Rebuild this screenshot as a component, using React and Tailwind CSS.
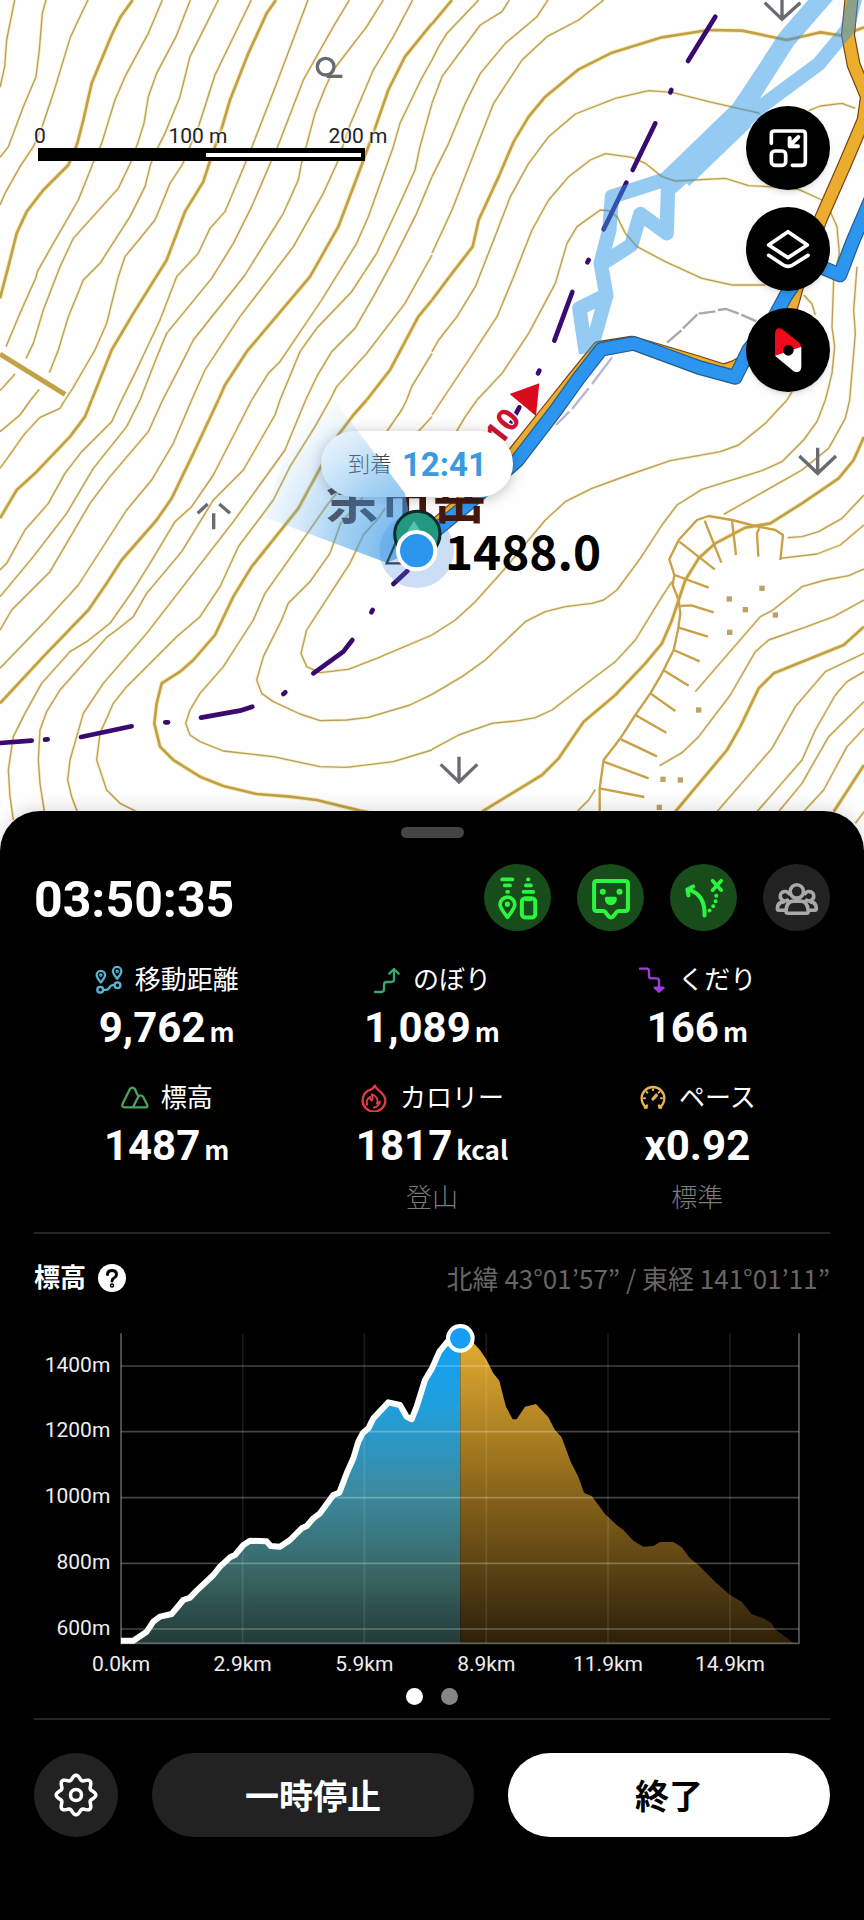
import React from "react";

/* Map geometry is drawn in four tiles, each placed with a translate. */
const TILES = [
  {
    at: "translate(0 0)",
    thin: [
      "44,0 20,120 14,200 0,262",
      "138,0 127,40 118,150 108,230 70,320 25,440 0,472",
      "264,0 235,60 210,115 160,280 128,375 100,440 60,500 15,580 0,615",
      "487,0 445,100 375,230 345,300 305,430 278,492 235,600 160,730 112,815 108,832 60,940 18,1040",
      "571,0 528,110 470,220 445,290 432,370 413,430 390,492 355,565 220,715 180,800 130,930 100,1030 78,1075",
      "655,0 570,170 540,290 495,400 470,450 452,492 435,560 390,650 300,790 250,840 205,950 175,1050 148,1118",
      "754,0 645,225 597,375 548,492 510,550 490,600 465,660 375,770 355,830 320,970 285,1050 215,1170 195,1200",
      "924,0 830,250 760,430 735,492 675,635 630,685 595,760 530,830 480,960 400,1130 365,1200",
      "1048,0 1000,80 910,240 837,430 810,492 755,620 700,730 635,835 500,1000 475,1060 420,1200",
      "1150,0 1100,80 1000,210 975,265 945,340 921,430 904,492 895,540 850,640 735,825 580,1020 540,1100 488,1200",
      "1238,0 1180,110 1120,210 1050,375 1010,492 970,580 880,740 720,950 615,1110 575,1200",
      "1296,180 1265,235 1200,370 1180,440 1105,650 1070,730 965,900 840,1085 805,1120 755,1200",
      "1296,310 1260,440 1245,510 1200,610 1130,760 1055,875 950,985 900,1055 840,1200",
      "1296,530 1250,640 1180,780 1120,890 1065,985 995,1055 950,1130 917,1200",
      "1296,765 1215,910 1100,1060 1010,1160 990,1200",
      "1296,1060 1235,1160 1220,1200",
      "45,1122 0,1172",
      "118,1168 92,1200",
    ],
    bold: [
      "398,0 362,50 335,105 275,250 250,360 232,430 205,495 130,570 80,635 50,700 25,800 0,895",
      "828,0 800,40 745,160 690,300 665,385 645,440 627,492 610,545 555,635 500,780 400,940 335,1050 275,1200",
      "1296,70 1215,170 1165,270 1125,385 1085,495 1015,680 930,830 740,1055 675,1155 655,1200",
      "1296,900 1255,950 1170,1110 1100,1200",
    ],
  },
  {
    at: "translate(1296 0)",
    thin: [
      "140,0 45,100 20,140 0,180",
      "232,0 210,35 145,75 30,230 0,310",
      "348,0 315,50 220,130 145,220 100,310 50,430 0,530",
      "515,0 440,60 345,110 270,180 185,310 130,450 60,630 0,760",
      "985,340 830,305 720,277 650,272 550,295 430,342 350,410 290,490 235,590 185,720 130,860 75,950 20,1020 0,1055",
      "1130,332 1165,318 1230,310 1270,325",
      "1170,600 1100,568 1010,560 950,557 880,535 730,543 690,530 640,490 600,472 520,461 475,480 410,530 350,600 300,690 245,830 195,950 110,1080 30,1200",
      "1000,855 900,855 810,835 700,785 615,740 580,700 555,650 530,632 505,630 435,680 405,730 370,850 290,1000 210,1120 135,1200",
      "1195,635 1215,680 1222,760 1205,840 1200,980 1208,1040 1200,1120 1180,1200",
      "1115,885 1140,912 1150,945",
      "1080,1175 1065,1200",
      "1275,800 1265,930 1270,1000 1253,1200",
    ],
    bold: [
      "60,0 0,72",
      "1296,82 1230,107 1165,97 1065,120 930,92 830,90 690,112 540,158 440,208 340,290 290,350 245,425 200,530 140,660 122,740 60,820 0,900",
    ],
  },
  {
    at: "translate(0 1200)",
    thin: [
      "92,0 60,45 0,95",
      "195,0 180,25 120,52 75,100 0,205",
      "365,0 335,65 245,155 195,220 145,310 75,390 20,490 0,510",
      "420,0 380,80 280,205 200,340 100,470 0,590",
      "488,0 445,95 330,230 270,310 150,515 35,630 0,690",
      "575,0 520,130 455,240 380,330 235,555 130,670 0,805",
      "755,0 640,225 575,320 525,365 450,490 400,570 330,670 260,725 210,755 125,850 75,940 40,1010 25,1110 30,1190 40,1260",
      "840,0 825,45 730,210 640,300 545,455 440,580 400,650 350,690 320,712 180,870 140,935 120,990 115,1080 120,1150 133,1235",
      "917,0 855,150 700,365 440,700 310,850 250,940 210,1080 203,1140 215,1190 232,1235",
      "990,0 945,80 870,200 820,300 715,440 660,560 600,650 530,710 380,860 340,910 300,1000 290,1080 320,1170 360,1210 410,1235",
      "1220,0 1205,30 1160,95 985,310 880,460 795,580 760,660 670,800 600,880 570,930 557,970 570,1005 600,1025 670,1053 820,1070 960,1100 1040,1102 1180,1085 1296,1050",
      "1296,50 1250,100 1022,370 990,460 930,545 865,610 845,660 790,770 770,840 785,880 820,905 900,942 960,962 1040,960 1105,952 1230,915 1296,883",
      "1155,325 1135,355 1090,405 1050,490 920,690 903,760 920,800 960,818 1045,808 1130,775 1296,705",
    ],
    bold: [
      "275,0 255,50 210,110 110,215 50,270 0,355",
      "655,0 580,160 515,295 470,360 365,480 320,550 265,630 130,770 0,910",
      "1100,0 1060,45 1015,105 960,205 895,325 755,500 700,590 645,705 580,780 540,815 485,850 470,910 463,970 480,1040 520,1080 600,1130 670,1158 770,1182 870,1190 950,1200 1080,1232 1200,1256",
    ],
  },
  {
    at: "translate(1296 1200)",
    thin: [
      "30,0 0,45",
      "135,0 100,50 70,100",
      "1065,0 1000,70 920,135 865,155 715,182 590,225 480,265 400,305 340,360 215,510 130,605 70,660 0,705",
      "1180,0 1155,65 1115,120 1050,185 990,212 810,268 735,315 690,375 625,475 555,570 515,600 480,610 400,620 340,635 280,665 160,780 90,830 0,883",
      "1253,0 1240,55 1190,145 1110,210 875,343",
      "720,545 690,590 610,720 550,785 490,830 360,930 310,953 260,962 180,970 80,1005 0,1048",
      "1067,413 1110,410 1160,395 1230,355 1296,285",
      "1045,475 1155,462 1225,435 1296,375",
      "790,875 985,650 1020,632 1110,560 1180,540 1250,527 1296,507",
      "683,1097 750,1058 800,1010 895,885 970,755 1010,720 1110,685 1205,650 1296,600",
      "855,1235 1020,1045 1090,920 1180,815 1296,760",
      "975,1235 1110,1080 1150,990 1210,885 1245,845 1296,815",
      "1040,1235 1110,1150 1190,1010 1296,905",
      "1115,1235 1175,1170 1245,1040 1296,985",
      "1270,1270 1296,1235",
      "435,1235 470,1200 490,1168",
    ],
    bold: [
      "1296,110 1265,180 1220,235 1110,310 1015,370 940,383 850,430 800,475 760,540 740,600 720,660 690,730 640,790 550,885 455,965 380,1075 330,1125 150,1235",
      "1296,680 1235,735 1025,820 980,865 925,980 885,1050 730,1235",
      "1205,1235 1296,1095",
    ],
  },
];

const CLIFF = [
  "1045,480 1053,405 1030,390 970,378 900,360 830,348 795,360 740,420 712,478 727,525 722,555 740,600 745,640 738,690 725,750 690,820 655,880 610,945 565,1015 515,1080 503,1165 503,1240",
  "818,362 868,488",
  "900,362 912,465",
  "982,385 975,400 979,470",
  "742,425 848,508",
  "728,525 830,563",
  "745,618 778,616 845,637",
  "740,683 828,710",
  "725,750 803,784",
  "697,812 770,857",
  "655,880 730,933",
  "610,945 703,998",
  "567,1018 675,1069",
  "515,1085 650,1135",
  "503,1165 637,1191",
];

const ROCKS = [[990, 565], [892, 597], [940, 629], [1030, 645], [893, 697], [800, 930], [693, 1138], [745, 1140], [682, 1222]];

const BORDER_EAST = [
  "850,50 768,183",
  "718,270 715,277",
  "670,370 602,510",
  "583,548 515,688",
  "470,780 466,787",
  "421,876 367,1022",
  "322,1112 318,1120",
  "262,1222 248,1248",
  "240,1265 236,1273",
];
const BORDER_WEST = [
  "1222,513 1180,552",
  "1118,630 1114,637",
  "1057,720 1030,755 940,820",
  "856,877 850,882",
  "757,920 720,932 603,953",
  "496,967 504,967",
  "395,979 243,1011",
  "135,1019 143,1018",
  "95,1022 0,1029",
];

const ORANGE = "1260,-20 1248,105 1265,195 1305,290 1295,360 1240,490 1165,660 1095,860 1070,950 980,1060 910,1100 875,1112 800,1088 600,1028 500,1044 422,1140 350,1230 240,1368 97,1500 -12,1595";
const BLUE = "1320,590 1262,725 1224,825 1165,800 1120,800 1060,890 1020,965 950,1050 910,1132 800,1102 605,1030 508,1048 440,1135 372,1230 255,1382 110,1510 0,1600 -46,1650";

const Lines = ({ list, ...rest }) => list.map((p) => <polyline key={p} points={p} {...rest} />);

function MapCanvas() {
  return (
    <svg viewBox="0 0 2592 2553" className="block h-full w-full" fill="none" aria-hidden="true">
      {TILES.map((t) => (
        <g key={t.at} transform={t.at} strokeLinejoin="round">
          <g stroke="#fbeebb">
            <Lines list={t.thin} strokeWidth="9" />
            <Lines list={t.bold} strokeWidth="14" />
          </g>
          <g stroke="#b5a066">
            <Lines list={t.thin} strokeWidth="4" />
          </g>
          <g stroke="#c0a04a">
            <Lines list={t.bold} strokeWidth="8" />
          </g>
        </g>
      ))}
      <path d="M0 1062 195 1183" stroke="#c2a244" strokeWidth="15" />
      <g transform="translate(1296 1200)">
        <g stroke="#c9a045" strokeWidth="7" strokeLinejoin="round">
          <Lines list={CLIFF} />
        </g>
        {ROCKS.map(([x, y]) => (
          <rect key={x} x={x - 8} y={y - 8} width="16" height="16" fill="#bda268" />
        ))}
      </g>

      <g stroke="#6b6a70" strokeWidth="10">
        <circle cx="977" cy="200" r="25" />
        <path d="M980 229h47" />
        <path d="M2346 0v58M2294 8l52 50 55-50" />
        <path d="M2453 1343v75M2398 1368l55 52 55-52" />
        <path d="M1377 2270v75M1322 2293l55 53 55-53" />
        <path d="M623 1512l-30 28M658 1512l32 28M641 1540v48" />
      </g>

      <g stroke="#3a0a70" strokeWidth="14" strokeLinecap="round" strokeLinejoin="round">
        <g transform="translate(1296 0)"><Lines list={BORDER_EAST} /></g>
        <g transform="translate(0 1200)"><Lines list={BORDER_WEST} /></g>
      </g>

      <g transform="translate(1296 0)">
        <g stroke="#a9a9ad" strokeWidth="7">
          <path d="M705 1028l43-37M753 985l43-42M800 941l50-7M858 930l24-3 38 14M928 944l45 20" />
          <path d="M540 1072l-60 80M470 1165l-50 62M412 1235l-40 40" stroke="#b9b6cf" />
        </g>
        <g strokeLinejoin="round">
          <polyline points={ORANGE} stroke="#7a3f10" strokeWidth="42" />
          <polyline points={ORANGE} stroke="#ebad2e" strokeWidth="35" />
        </g>
        <g opacity="0.5" stroke="#2f97ea" strokeWidth="43" strokeLinejoin="round">
          <path d="M1178 -20 1070 100 920 325 700 538 540 590 532 690 506 790 523 885 442 925 462 1060" />
          <path d="M1200 -40 1062 120 925 335" strokeWidth="56" />
          <path d="M1275 -30 1245 90 1160 192 980 325 800 490 708 570 704 700 625 642 598 735 512 790" />
          <path d="M932 350 745 530" strokeWidth="78" />
          <path d="M523 885 478 1045" />
        </g>
        <polygon points="233,1182 322,1150 312,1248" fill="#da0b1c" />
        <g strokeLinejoin="round">
          <polyline points={BLUE} stroke="#255c88" strokeWidth="44" />
          <polyline points={BLUE} stroke="#2b95f0" strokeWidth="37" />
        </g>
      </g>

      <text
        x="1500"
        y="1343"
        transform="rotate(-52 1500 1343)"
        className="font-[Noto_Sans,sans-serif] font-bold"
        fontSize="94"
        fill="#cc1230"
        stroke="#ffffff"
        strokeWidth="8"
        paintOrder="stroke"
      >
        10
      </text>
      <text x="978" y="1556" className="font-['Noto_Sans_CJK_JP',sans-serif] font-bold" fontSize="160" fill="#45180f">
        余市岳
      </text>
    </svg>
  );
}

/* Heading cone and current position, above the arrival bubble. */
function PositionMarker() {
  return (
    <svg viewBox="0 0 2592 2553" className="pointer-events-none absolute inset-0 h-full w-full" fill="none" aria-hidden="true">
      <defs>
        <radialGradient id="cone" gradientUnits="userSpaceOnUse" cx="1250" cy="1650" r="520">
          <stop offset="0" stopColor="#2b8fe6" stopOpacity="0.75" />
          <stop offset="0.45" stopColor="#4ba3e8" stopOpacity="0.5" />
          <stop offset="1" stopColor="#8cc4f2" stopOpacity="0" />
        </radialGradient>
      </defs>
      <circle cx="1250" cy="1652" r="112" fill="#3d80e0" fillOpacity="0.26" />
      <path d="M1250 1652 1215 1480 980 1170 880 1300 790 1550 1160 1688Z" fill="url(#cone)" />
      <path d="M1195 1610 1160 1690H1250" stroke="#2b4a60" strokeWidth="7" />
      <circle cx="1252" cy="1602" r="68" fill="#21987f" stroke="#0c2a2c" strokeWidth="9" />
      <path d="M1212 1610l30-48 30 48Z" fill="#5cc0b0" />
      <circle cx="1250" cy="1652" r="56" fill="#2c95ee" stroke="#ffffff" strokeWidth="12" />
      <text x="1335" y="1709" className="font-['Noto_Sans_CJK_JP',sans-serif] font-bold" fontSize="143" fill="#000000">
        1488.0
      </text>
    </svg>
  );
}

function ScaleBar() {
  return (
    <div className="absolute left-[38px] top-[124px] w-[327px]">
      <div className="-ml-20 flex w-[480px] text-center text-[21px] leading-6 text-[#222] [text-shadow:0_0_3px_#fff,0_0_3px_#fff,0_0_4px_#fff]">
        <span className="w-40 pl-1">0</span>
        <span className="w-40">100 m</span>
        <span className="w-40">200 m</span>
      </div>
      <div className="flex h-[13px] items-center bg-black pr-1">
        <div className="ml-[168px] h-1 flex-1 bg-white" />
      </div>
    </div>
  );
}

function MapButton({ label, viewBox, children }) {
  return (
    <button aria-label={label} className="size-[84px] rounded-full bg-black text-white shadow-md">
      <svg viewBox={viewBox} className="size-full" fill="none" stroke="currentColor" strokeWidth="11" strokeLinecap="round" strokeLinejoin="round">
        {children}
      </svg>
    </button>
  );
}

function ModeButton({ label, x, off, children }) {
  const tone = off ? "bg-[#222222] text-[#a9a9a9]" : "bg-[#184c1b] text-[#2cf540]";
  return (
    <button aria-label={label} className={"size-[67px] rounded-full " + tone}>
      <svg viewBox={`${x - 100} 192 200 200`} className="size-full" fill="none" stroke="currentColor" strokeWidth="12" strokeLinecap="round" strokeLinejoin="round">
        {children}
      </svg>
    </button>
  );
}

function Stat({ icon, label, value, unit, note }) {
  return (
    <div className="flex flex-col items-center">
      <div className="flex items-center gap-3">
        {icon}
        <span className="text-[26px] leading-8">{label}</span>
      </div>
      <div className="mt-2 flex items-baseline gap-1 font-bold leading-[48px]">
        <span className="text-[42px]">{value}</span>
        {unit && <span className="font-['Noto_Sans_CJK_JP',sans-serif] text-[26px] leading-8">{unit}</span>}
      </div>
      {note && <div className="mt-3 text-[26px] font-light leading-8 text-[#7c7c7c]">{note}</div>}
    </div>
  );
}

function StatIcon({ viewBox, className, children }) {
  return (
    <svg viewBox={viewBox} className={"size-7 " + className} fill="none" stroke="currentColor" strokeWidth="7" strokeLinecap="round" strokeLinejoin="round" aria-hidden="true">
      {children}
    </svg>
  );
}

const distanceIcon = (
  <StatIcon viewBox="288 490 86 86" className="text-[#55b8d2]">
    <path d="M306 541C297 530 293 525 293 518a13 13 0 0 1 26 0C319 525 315 530 306 541Z" />
    <path d="M356 529C347 518 343 513 343 506a13 13 0 0 1 26 0C369 513 365 518 356 529Z" />
    <circle cx="306" cy="518" r="2" /><circle cx="356" cy="506" r="2" />
    <circle cx="304" cy="563" r="9" /><circle cx="357" cy="549" r="9" />
    <path d="M313 563h8q8 0 12-8t13-6" />
  </StatIcon>
);
const upIcon = (
  <StatIcon viewBox="1125 490 84 84" className="text-[#36aa6b]">
    <path d="M1131 568h19q8 0 8-8v-14q0-8 8-8h14q8 0 8-8v-30M1174 513l14-14 14 14" />
  </StatIcon>
);
const downIcon = (
  <StatIcon viewBox="625 490 84 84" className="text-[#a03cdb]">
    <path d="M631 498h20q7 0 7 7v15q0 7 7 7h16q7 0 7 7v32M675 555l13 12 14-12Z" />
  </StatIcon>
);
const mountainIcon = (
  <StatIcon viewBox="365 64 86 86" className="text-[#4ba35c]">
    <path d="M416 98 408 80q-8-10-16 0L370 125q-4 11 6 11h62q11 0 7-9l-12-24q-8-8-15 0L402 135" />
  </StatIcon>
);
const flameIcon = (
  <StatIcon viewBox="1085 63 86 86" className="text-[#e03c42]">
    <path d="M1131 68c2 14 32 20 32 46a35 34 0 0 1-70 0c0-17 8-25 17-31q6 0 8-3 9-4 13-12Z" />
    <path d="M1107 127c-5-14 2-20 9-25 0 6 1 9 5 12 5-8 3-13 0-19 16 5 21 16 16 28 4-1 7-3 9-6-2 12-9 17-18 18" strokeWidth="6" />
  </StatIcon>
);
const gaugeIcon = (
  <StatIcon viewBox="625 60 84 84" className="text-[#e8b552]">
    <path d="M648 131q-15-10-15-28a34 34 0 0 1 68 0q0 18-15 28" />
    <path d="M643 131l6-6M691 131l-6-6" strokeWidth="8" />
    <path d="M667 76v3M648 84l2 2M686 84l-2 2M640 103h3M691 103h3" strokeWidth="6" />
    <path d="M667 105l10-11" strokeWidth="10" />
  </StatIcon>
);

const ASCENT = "363,1022 400,1022 440,995 460,965 480,950 515,942 550,900 570,893 590,872 640,825 660,800 690,772 705,765 730,735 750,722 800,724 812,738 840,740 870,720 905,685 920,678 940,655 960,640 1000,585 1018,578 1040,520 1060,475 1075,425 1088,400 1105,385 1120,355 1165,307 1200,315 1220,350 1235,358 1250,320 1275,240 1296,205 1318,155 1345,122 1381,115";
const DESCENT = "1381,115 1420,128 1440,150 1460,180 1480,220 1498,242 1510,290 1518,320 1538,358 1550,358 1575,320 1608,312 1645,352 1665,390 1685,412 1712,485 1735,530 1752,578 1775,588 1815,642 1850,675 1870,690 1900,722 1930,740 1960,738 1980,726 2020,726 2045,742 2070,775 2095,795 2145,845 2190,885 2225,905 2255,943 2290,955 2315,970 2325,988 2378,1027";

function ElevationChart() {
  const rows = [["1400m", 198], ["1200m", 395], ["1000m", 593], ["800m", 790], ["600m", 987]];
  const cols = [["0.0km", 363], ["2.9km", 728], ["5.9km", 1093], ["8.9km", 1459], ["11.9km", 1824], ["14.9km", 2190]];
  return (
    <svg viewBox="102 30 2388 1110" className="mt-4 block w-full" fill="none" role="img" aria-label="標高グラフ">
      <defs>
        <linearGradient id="done" x1="0" y1="115" x2="0" y2="1030" gradientUnits="userSpaceOnUse">
          <stop offset="0" stopColor="#0fa0f4" />
          <stop offset="0.22" stopColor="#219fdd" />
          <stop offset="0.5" stopColor="#3a8ba0" />
          <stop offset="0.78" stopColor="#386562" />
          <stop offset="1" stopColor="#223a38" />
        </linearGradient>
        <linearGradient id="ahead" x1="0" y1="115" x2="0" y2="1030" gradientUnits="userSpaceOnUse">
          <stop offset="0" stopColor="#e3ac30" />
          <stop offset="0.5" stopColor="#8a651a" />
          <stop offset="0.8" stopColor="#513c12" />
          <stop offset="1" stopColor="#2e1f08" />
        </linearGradient>
      </defs>
      <polygon points={`${ASCENT} 1381,1030 363,1030`} fill="url(#done)" />
      <polygon points={`${DESCENT} 2380,1030 1381,1030`} fill="url(#ahead)" />
      <g stroke="#ffffff">
        {rows.map(([t, y]) => <path key={t} d={`M363 ${y}H2397`} strokeOpacity="0.27" strokeWidth="5" />)}
        {cols.slice(1).map(([t, x]) => <path key={t} d={`M${x} 100V1030`} strokeOpacity="0.1" strokeWidth="5" />)}
        <path d="M363 100V1030H2397V100" strokeOpacity="0.35" strokeWidth="5" />
      </g>
      <polyline points={ASCENT} stroke="#ffffff" strokeWidth="18" strokeLinejoin="round" />
      <circle cx="1381" cy="115" r="37" fill="#179df6" stroke="#ffffff" strokeWidth="12" />
      <g fill="#eeeeee" fontSize="63">
        {rows.map(([t, y]) => <text key={t} x="331" y={y + 17} textAnchor="end">{t}</text>)}
        {cols.map(([t, x]) => <text key={t} x={x} y="1113" textAnchor="middle">{t}</text>)}
      </g>
    </svg>
  );
}

const gearPath =
  Array.from({ length: 96 }, (_, i) => {
    const a = (i / 96) * Math.PI * 2;
    const r = 17.6 + 2.2 * Math.cos(8 * a);
    return `${i ? "L" : "M"}${(r * Math.sin(a)).toFixed(2)} ${(-r * Math.cos(a)).toFixed(2)}`;
  }).join("") + "Z";

export default function App() {
  return (
    <main className="flex min-h-screen flex-col bg-black font-[Roboto,'Noto_Sans_CJK_JP',sans-serif] text-white">
      <section aria-label="地図" className="relative aspect-[864/851] overflow-hidden bg-[#fefefe]">
        <MapCanvas />
        <div className="absolute left-[37.2%] top-[50.7%] flex h-[66px] w-[192px] items-center justify-center gap-[10px] rounded-full bg-white shadow-[0_2px_14px_rgba(0,0,0,0.25)]">
          <span className="text-[22px] font-light text-[#444]">到着</span>
          <span className="text-[33px] font-bold text-[#3a9ae0]">12:41</span>
        </div>
        <PositionMarker />
        <ScaleBar />
        <div className="absolute right-[34px] top-[106px] flex flex-col gap-[17px]">
          <MapButton label="縮小表示" viewBox="943 316 252 252">
            <path d="M1019 428V400q0-9 9-9h84q9 0 9 9v85q0 9-9 9h-30" />
            <rect x="1019" y="451" width="43" height="43" rx="11" />
            <path d="M1100 409l-24 24M1074 412v25h25" strokeWidth="12" />
          </MapButton>
          <MapButton label="レイヤー" viewBox="943 619 252 252">
            <path d="M1069 693l58 40-58 38-58-38Z" />
            <path d="M1011 764l44 29q14 8 28 0l46-29" />
          </MapButton>
          <MapButton label="コンパス" viewBox="943 921 252 252">
            <g stroke="none">
              <path d="M1030 1064V996q2-18 20-13l50 40q8 6 9 14Z" fill="#ee0a18" />
              <path d="M1109 1037v60q-1 20-20 15-6-2-10-7l-44-36-5-5Z" fill="#ffffff" />
              <circle cx="1070" cy="1048" r="16" fill="#000000" />
            </g>
          </MapButton>
        </div>
      </section>

      <section className="relative -mt-10 flex-1 rounded-t-[40px] bg-black px-[34px] pt-4 pb-20 shadow-[0_-4px_16px_rgba(0,0,0,0.12)]">
        <div className="mx-auto h-[11px] w-[63px] rounded-full bg-[#444]" />

        <header className="mt-[26px] flex items-center justify-between">
          <h1 className="pt-1 text-[50px] font-bold leading-none">03:50:35</h1>
          <div className="flex gap-[26px]">
            <ModeButton label="位置情報の送受信" x={259}>
              <path d="M213 238h31M221 256h16M228 275h3M290 238h2M284 256h15M277 275h29" strokeWidth="11" />
              <path d="M229 351C212 330 207 321 207 313a22 22 0 0 1 44 0C251 321 246 330 229 351Z" strokeWidth="11" />
              <circle cx="229" cy="312" r="4" strokeWidth="8" />
              <rect x="272" y="294" width="40" height="58" rx="11" strokeWidth="12" />
              <path d="M285 299h14" strokeWidth="8" />
            </ModeButton>
            <ModeButton label="吹き出し" x={537}>
              <path d="M496 243h85q8 0 8 8v73q0 8-8 8h-20q-3 0-6 4l-10 12q-7 8-14 0l-9-12q-3-4-6-4h-20q-8 0-8-8v-73q0-8 8-8Z" />
              <g stroke="none" fill="currentColor">
                <circle cx="514" cy="275" r="9" /><circle cx="564" cy="275" r="9" />
                <path d="M526 290h25q5 0 5 6-2 19-18 19t-18-19q0-6 6-6Z" />
              </g>
            </ModeButton>
            <ModeButton label="ルート案内" x={815}>
              <path d="M818 346C820 306 806 280 773 269" />
              <path d="M784 259l-17 9 3 18" />
              <path d="M842 242l26 28M868 242l-26 28" strokeWidth="11" />
              <path d="M853 287h0.1M851 303h0.1M844 318h0.1M833 331h0.1" />
            </ModeButton>
            <ModeButton label="グループ" x={1095} off>
              <g strokeWidth="11">
                <circle cx="1096" cy="274" r="20" />
                <path d="M1069 339q-5 0-5-6 1-30 22-30h22q20 0 22 30 0 6-5 6Z" />
                <path d="M1068 300a14 14 0 1 1 4-20M1125 300a14 14 0 1 0-4-20" />
                <path d="M1056 305q-18 2-18 20 0 5 5 5h19M1138 305q16 2 16 20 0 5-5 5h-17" />
              </g>
            </ModeButton>
          </div>
        </header>

        <div className="mt-[33px] grid grid-cols-3 gap-y-[30px]">
          <Stat icon={distanceIcon} label="移動距離" value="9,762" unit="m" />
          <Stat icon={upIcon} label="のぼり" value="1,089" unit="m" />
          <Stat icon={downIcon} label="くだり" value="166" unit="m" />
          <Stat icon={mountainIcon} label="標高" value="1487" unit="m" />
          <Stat icon={flameIcon} label="カロリー" value="1817" unit="kcal" note="登山" />
          <Stat icon={gaugeIcon} label="ペース" value="x0.92" note="標準" />
        </div>

        <div className="mt-[18px] flex items-center justify-between border-t-2 border-[#262626] pt-7 leading-8">
          <div className="flex items-center gap-3">
            <h2 className="text-[26px] font-bold">標高</h2>
            <button aria-label="標高について" className="size-7 rounded-full bg-white text-black">
              <svg viewBox="0 0 28 28" className="size-full" fill="none" stroke="currentColor" strokeWidth="3" strokeLinecap="round" strokeLinejoin="round">
                <path d="M9.500 10.500q0-4 4.500-4t4.500 4q0 2-2.500 3.500-2 1-2 3" />
                <circle cx="14" cy="21.500" r="0.700" />
              </svg>
            </button>
          </div>
          <p className="font-['Noto_Sans_CJK_JP',sans-serif] text-[26px] text-[#666]">北緯 43°01’57” / 東経 141°01’11”</p>
        </div>

        <ElevationChart />

        <div className="mt-2 flex justify-center gap-[18px]">
          <button aria-label="1ページ目" className="size-[17px] rounded-full bg-white" />
          <button aria-label="2ページ目" className="size-[17px] rounded-full bg-[#858585]" />
        </div>

        <footer className="mt-[13px] flex gap-[34px] border-t-2 border-[#262626] pt-[33px]">
          <button aria-label="設定" className="size-[84px] shrink-0 rounded-full bg-[#222]">
            <svg viewBox="-42 -42 84 84" className="size-full" fill="none" stroke="currentColor" strokeWidth="3.500" strokeLinejoin="round">
              <path d={gearPath} />
              <circle r="5.500" />
            </svg>
          </button>
          <button className="h-[84px] flex-1 rounded-full bg-[#222] pt-1 text-[34px] font-bold">一時停止</button>
          <button className="h-[84px] flex-1 rounded-full bg-white pt-1 text-[34px] font-bold text-black">終了</button>
        </footer>
      </section>
    </main>
  );
}
